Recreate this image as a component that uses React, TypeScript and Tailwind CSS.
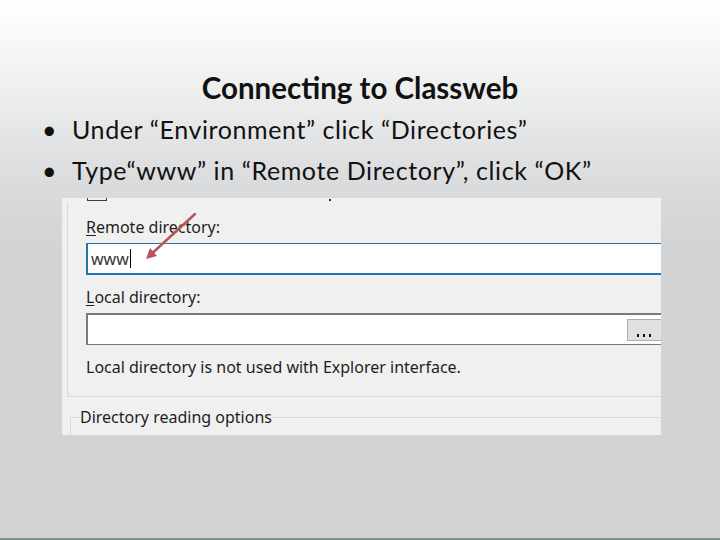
import React from "react";

export default function App() {
  const dlg = { fontFamily: '"Noto Sans", "Open Sans", sans-serif' };
  return (
    <div
      className="w-[720px] h-[540px] flex flex-col overflow-hidden bg-[linear-gradient(180deg,#ffffff_0%,#eceded_18%,#dcdddf_32%,#d3d4d6_44%,#d1d2d4_100%)]"
      style={{ fontFamily: 'Lato, "Open Sans", sans-serif' }}
    >
      <h1 className="pt-[71px] h-[105px] text-center text-[29.5px] leading-[34px] font-bold text-[#111]">
        Connecting to Classweb
      </h1>
      <ul className="mt-[4px] text-[25px] leading-[41px] text-[#111]">
        <li className="flex">
          <span className="w-[72px] pl-[42px]">•</span>
          <span className="tracking-[0.6px]">Under “Environment” click “Directories”</span>
        </li>
        <li className="flex">
          <span className="w-[72px] pl-[42px]">•</span>
          <span className="tracking-[0.6px]">Type“www” in “Remote Directory”, click “OK”</span>
        </li>
      </ul>

      <div
        className="mt-[7px] ml-[62px] w-[599px] h-[237px] shrink-0 bg-[#f0f0f0] relative overflow-hidden text-[#1e1e1e]"
        style={dlg}
      >
        <div className="flex h-[4px]">
          <div className="ml-[25px] w-[20px] h-[3px] border-x border-b border-[#3a3a3a]" />
          <div className="ml-[222px] mt-[1px] w-[2px] h-[2px] bg-[#2a2a2a]" />
        </div>

        <div className="ml-[5px] w-[640px] border-l border-b border-[#d9d9d9] pl-[18px] pb-[19px] flex flex-col">
          <div className="mt-[15px] h-[20px] text-[16px] leading-[20px]">
            <span className="underline underline-offset-2">R</span>emote directory:
          </div>
          <div className="mt-[6px] h-[32px] w-[600px] bg-white border-t border-b-2 border-l-2 border-[#2474b2] flex items-center pl-[3px]">
            <span className="text-[16px] leading-[20px] text-[#333]">www</span>
            <span className="ml-[1px] w-[1px] h-[19px] bg-black" />
          </div>
          <div className="mt-[12px] h-[20px] text-[16px] leading-[20px]">
            <span className="underline underline-offset-2">L</span>ocal directory:
          </div>
          <div className="mt-[6px] h-[32px] w-[600px] bg-white border-t-2 border-l-2 border-b border-[#7a7a7a] flex items-start">
            <div className="flex-1" />
            <div className="mt-[4px] mr-[19px] w-[40px] h-[22px] bg-[#e1e1e1] border border-[#adadad] flex items-end justify-center pb-[3px] gap-[4px] pr-[6px]">
              <span className="w-[2px] h-[3px] bg-[#111]" />
              <span className="w-[2px] h-[3px] bg-[#111]" />
              <span className="w-[2px] h-[3px] bg-[#111]" />
            </div>
          </div>
          <div className="mt-[12px] h-[20px] text-[16px] leading-[20px]">
            Local directory is not used with Explorer interface.
          </div>
        </div>

        <fieldset className="ml-[8px] mt-[10px] w-[640px] h-[60px] border-l border-t border-[#d9d9d9]">
          <legend className="ml-[9px] text-[16px] leading-[20px]">Directory reading options</legend>
        </fieldset>

        <svg className="absolute left-0 top-0 pointer-events-none" width="599" height="237">
          <line x1="133" y1="16" x2="91" y2="54.5" stroke="#b8545a" strokeWidth="2.5" strokeLinecap="round" />
          <polygon points="84,61 95,58 88,50" fill="#b8545a" />
        </svg>
      </div>

      <div className="flex-1" />
      <div className="h-[2px] bg-[#789689]" />
    </div>
  );
}
